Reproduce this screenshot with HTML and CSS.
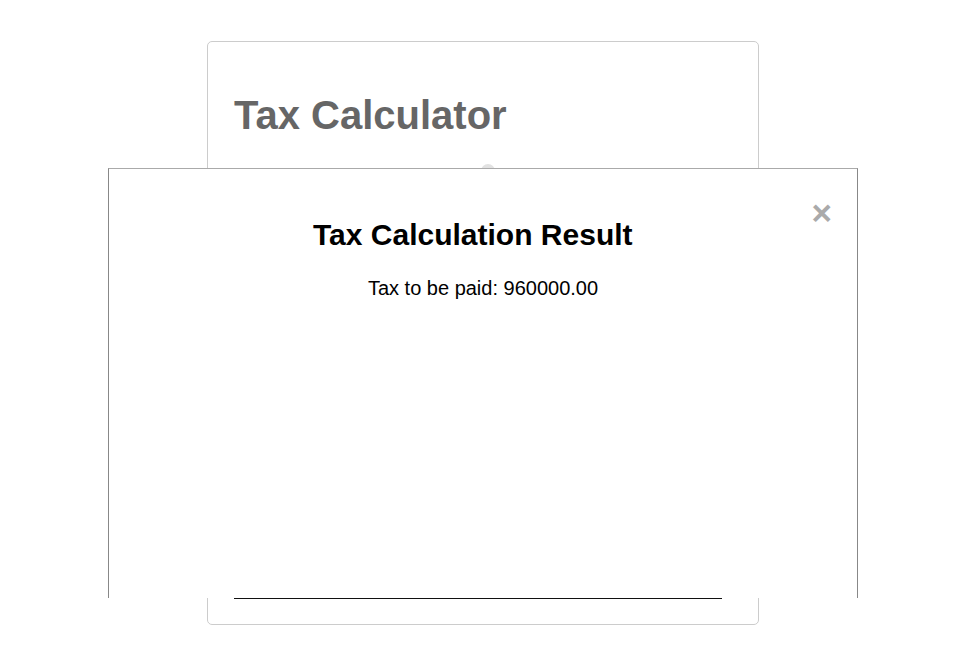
FILE: index.html
```html
<!DOCTYPE html>
<html lang="en">
<head>
<meta charset="utf-8">
<title>Tax Calculator</title>
<link rel="stylesheet" href="styles.css">
</head>
<body>
<div class="page">
  <div class="card">
    <h1 class="card-title">Tax Calculator</h1>
    <div class="slider-row"><span class="thumb"></span></div>
    <div class="spacer"></div>
    <div class="submit-edge"></div>
  </div>
</div>

<div class="modal">
  <div class="modal-content">
    <span class="close">&times;</span>
    <h2 class="modal-title">Tax Calculation Result</h2>
    <p class="modal-text">Tax to be paid: 960000.00</p>
  </div>
</div>
</body>
</html>
```
FILE: styles.css
```css
html, body {
  margin: 0;
  padding: 0;
  background: #ffffff;
  font-family: "Liberation Sans", Arial, sans-serif;
}

.page {
  padding: 41px 0 0 207px;
}

.card {
  box-sizing: border-box;
  width: 552px;
  height: 584px;
  border: 1px solid #cccccc;
  border-radius: 5px;
  padding: 25px 25px 25px 26px;
  display: flex;
  flex-direction: column;
}

.card-title {
  margin: 25px 0 0;
  font-size: 40px;
  font-weight: bold;
  color: #666666;
  line-height: 46px;
}

.slider-row {
  margin-top: 26px;
  padding-left: 247px;
  height: 14px;
}

.thumb {
  display: block;
  width: 14px;
  height: 14px;
  border-radius: 50%;
  background: #e2e2e2;
}

.spacer {
  flex: 1;
}

.submit-edge {
  width: 488px;
  margin-left: 0;
  height: 2px;
  background: #111111;
  border-top: 1px solid #bbbbbb;
  box-sizing: border-box;
}

.modal {
  position: fixed;
  top: 168px;
  left: 108px;
}

.modal-content {
  box-sizing: border-box;
  width: 750px;
  height: 430px;
  background: #ffffff;
  border: 1px solid #888888;
  border-top-color: #aaaaaa;
  border-bottom: none;
  padding: 25px;
  text-align: center;
}

.close {
  float: right;
  margin-top: 1px;
  color: #aaaaaa;
  font-size: 35px;
  font-weight: bold;
  line-height: 1;
}

.modal-title {
  margin: 24px 0 0;
  font-size: 30px;
  font-weight: bold;
  color: #000000;
}

.modal-text {
  margin: 25px 0 0;
  font-size: 20px;
  color: #000000;
}
```
